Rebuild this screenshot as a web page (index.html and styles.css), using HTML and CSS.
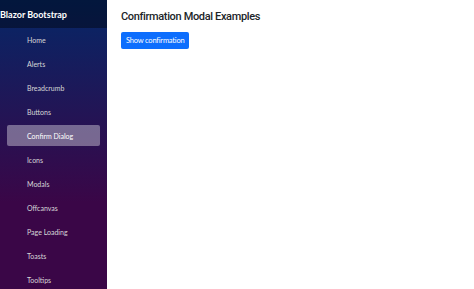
FILE: index.html
```html
<!DOCTYPE html>
<html lang="en">
<head>
    <meta charset="UTF-8">
    <meta name="viewport" content="width=device-width, initial-scale=1.0">
    <title>Blazor Bootstrap</title>
    <link rel="stylesheet" href="styles.css">
</head>
<body>
    <div class="page">
        <aside class="sidebar">
            <div class="top-row">
                <span class="brand">Blazor Bootstrap</span>
            </div>
            <nav class="nav">
                <a class="nav-link" href="#">Home</a>
                <a class="nav-link" href="#">Alerts</a>
                <a class="nav-link" href="#">Breadcrumb</a>
                <a class="nav-link" href="#">Buttons</a>
                <a class="nav-link active" href="#">Confirm Dialog</a>
                <a class="nav-link" href="#">Icons</a>
                <a class="nav-link" href="#">Modals</a>
                <a class="nav-link" href="#">Offcanvas</a>
                <a class="nav-link" href="#">Page Loading</a>
                <a class="nav-link" href="#">Toasts</a>
                <a class="nav-link" href="#">Tooltips</a>
            </nav>
        </aside>
        <main class="content">
            <h1>Confirmation Modal Examples</h1>
            <button class="btn">Show confirmation</button>
        </main>
    </div>
</body>
</html>
```

FILE: styles.css
```css
/* Layout */
body {
    margin: 0;
    font-family: Lato, "Open Sans", sans-serif;
    background: #fff;
}
.page {
    display: flex;
    height: 100vh;
    overflow: hidden;
}
.sidebar {
    width: 107px;
    flex-shrink: 0;
    background-image: linear-gradient(180deg, rgb(5, 39, 103) 0%, #3a0647 70%);
}
.top-row {
    height: 28px;
    background-color: rgba(0, 0, 0, 0.4);
    display: flex;
    align-items: center;
}
.brand {
    color: #fff;
    font-size: 9px;
    font-weight: 700;
    white-space: nowrap;
}
.nav {
    display: flex;
    flex-direction: column;
}
.nav-link {
    display: block;
    margin: 1px 7px 2px 7px;
    height: 21px;
    line-height: 22px;
    padding-left: 20px;
    font-size: 7px;
    color: #d7d7d7;
    text-decoration: none;
    border-radius: 2px;
}
.nav-link.active {
    background-color: rgba(255, 255, 255, 0.37);
    color: #fff;
}
.content {
    padding: 9px 14px;
}
h1 {
    margin: 0 0 7px 0;
    font-family: Roboto, sans-serif;
    font-size: 11px;
    font-weight: 500;
    letter-spacing: -0.35px;
    line-height: 16px;
    color: #212529;
}
.btn {
    display: block;
    font-family: inherit;
    font-size: 7.5px;
    letter-spacing: -0.2px;
    color: #fff;
    background-color: #0d6efd;
    border: none;
    border-radius: 2px;
    padding: 0 5px;
    height: 17px;
}
```
